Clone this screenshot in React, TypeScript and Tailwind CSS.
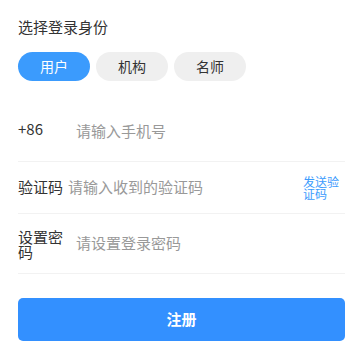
import { useState } from 'react';

const ROLES = ['用户', '机构', '名师'];

export default function App() {
  const [role, setRole] = useState('用户');

  return (
    <div
      className="w-[360px] h-[360px] bg-white pl-[18px] pr-[15px] pt-[18px]"
      style={{ fontFamily: '"Noto Sans CJK SC", "Noto Sans", sans-serif' }}
    >
      <div className="text-[15px] leading-[18px] text-[#333333]">选择登录身份</div>

      <div className="flex gap-[6px] mt-[16px]">
        {ROLES.map((r) => (
          <button
            key={r}
            onClick={() => setRole(r)}
            className={
              r === role
                ? 'w-[72px] h-[29px] rounded-full bg-[#3b9bfd] text-white text-[14px]'
                : 'w-[72px] h-[29px] rounded-full bg-[#efefef] text-[#333333] text-[14px]'
            }
          >
            {r}
          </button>
        ))}
      </div>

      <div className="mt-[25px]">
        {/* phone */}
        <div className="flex items-center h-[56px] border-b border-[#f2f2f2] pb-[2px]">
          <span className="w-[58px] shrink-0 text-[15px] text-[#333333] -mt-[6px]">+86</span>
          <input
            className="flex-1 min-w-0 outline-none text-[15px] text-[#333333] placeholder:text-[#999999] -mt-[2px]"
            placeholder="请输入手机号"
          />
        </div>

        {/* code */}
        <div className="flex items-center h-[52px] border-b border-[#f2f2f2]">
          <span className="w-[50px] shrink-0 text-[15px] text-[#333333]">验证码</span>
          <input
            className="flex-1 min-w-0 outline-none text-[15px] text-[#333333] placeholder:text-[#999999]"
            placeholder="请输入收到的验证码"
          />
          <button className="w-[38px] shrink-0 text-left text-[12px] leading-[12px] text-[#3b9bfd] mr-[4px]">
            发送验证码
          </button>
        </div>

        {/* password */}
        <div className="flex items-center h-[60px] border-b border-[#f2f2f2]">
          <span className="w-[45px] mr-[13px] shrink-0 text-[15px] leading-[15px] text-[#333333]">设置密码</span>
          <input
            type="password"
            className="flex-1 min-w-0 outline-none text-[15px] text-[#333333] placeholder:text-[#999999]"
            placeholder="请设置登录密码"
          />
        </div>
      </div>

      <button className="mt-[24px] w-full h-[43px] rounded-[5px] bg-[#3390ff] text-white text-[15px] font-bold">
        注册
      </button>
    </div>
  );
}
